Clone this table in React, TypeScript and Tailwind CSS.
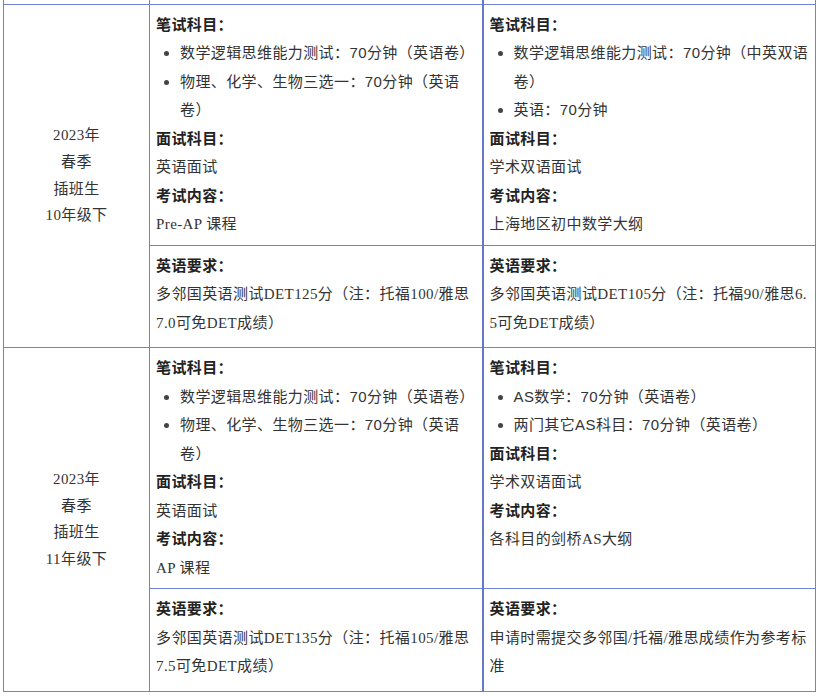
import React from 'react'

type Block =
  | { kind: 'label'; text: string }
  | { kind: 'text'; text: string }
  | { kind: 'list'; items: string[] }

interface Row {
  term: string[]
  left: Block[]
  right: Block[]
  leftEng: string
  rightEng: string
}

const rows: Row[] = [
  {
    term: ['2023年', '春季', '插班生', '10年级下'],
    left: [
      { kind: 'label', text: '笔试科目：' },
      { kind: 'list', items: ['数学逻辑思维能力测试：70分钟（英语卷）', '物理、化学、生物三选一：70分钟（英语卷）'] },
      { kind: 'label', text: '面试科目：' },
      { kind: 'text', text: '英语面试' },
      { kind: 'label', text: '考试内容：' },
      { kind: 'text', text: 'Pre-AP 课程' },
    ],
    right: [
      { kind: 'label', text: '笔试科目：' },
      { kind: 'list', items: ['数学逻辑思维能力测试：70分钟（中英双语卷）', '英语：70分钟'] },
      { kind: 'label', text: '面试科目：' },
      { kind: 'text', text: '学术双语面试' },
      { kind: 'label', text: '考试内容：' },
      { kind: 'text', text: '上海地区初中数学大纲' },
    ],
    leftEng: '多邻国英语测试DET125分（注：托福100/雅思7.0可免DET成绩）',
    rightEng: '多邻国英语测试DET105分（注：托福90/雅思6.5可免DET成绩）',
  },
  {
    term: ['2023年', '春季', '插班生', '11年级下'],
    left: [
      { kind: 'label', text: '笔试科目：' },
      { kind: 'list', items: ['数学逻辑思维能力测试：70分钟（英语卷）', '物理、化学、生物三选一：70分钟（英语卷）'] },
      { kind: 'label', text: '面试科目：' },
      { kind: 'text', text: '英语面试' },
      { kind: 'label', text: '考试内容：' },
      { kind: 'text', text: 'AP 课程' },
    ],
    right: [
      { kind: 'label', text: '笔试科目：' },
      { kind: 'list', items: ['AS数学：70分钟（英语卷）', '两门其它AS科目：70分钟（英语卷）'] },
      { kind: 'label', text: '面试科目：' },
      { kind: 'text', text: '学术双语面试' },
      { kind: 'label', text: '考试内容：' },
      { kind: 'text', text: '各科目的剑桥AS大纲' },
    ],
    leftEng: '多邻国英语测试DET135分（注：托福105/雅思7.5可免DET成绩）',
    rightEng: '申请时需提交多邻国/托福/雅思成绩作为参考标准',
  },
]

const serif = "font-['Liberation_Serif','Noto_Sans_CJK_SC',serif]"
const sans = "font-['Liberation_Sans','Noto_Sans_CJK_SC',sans-serif]"

function Blocks({ blocks }: { blocks: Block[] }) {
  return (
    <>
      {blocks.map((b, i) => {
        if (b.kind === 'label') {
          return (
            <p key={i} className="font-bold text-[#222]">
              {b.text}
            </p>
          )
        }
        if (b.kind === 'text') {
          return <p key={i}>{b.text}</p>
        }
        return (
          <ul key={i} className={`list-disc pl-[24px] marker:text-[#444] ${sans}`}>
            {b.items.map((it) => (
              <li key={it}>{it}</li>
            ))}
          </ul>
        )
      })}
    </>
  )
}

export default function App() {
  const border = 'border border-[#7083d0]'
  const rightBorder = 'border border-l-2 border-[#7083d0] border-l-[#6677c8]'

  return (
    <div
      className={`bg-white min-h-[696px] pl-[3px] text-[15px] leading-[28.5px] tracking-[0.4px] text-[#333] [text-spacing-trim:space-all] ${serif}`}
    >
      <table className="table-fixed border-collapse w-[812px]">
        <colgroup>
          <col className="w-[146px]" />
          <col className="w-[333px]" />
          <col className="w-[333px]" />
        </colgroup>
        <tbody>
          {/* tail of the previous row, cut off by the crop */}
          <tr className="h-[4px]">
            <td className="border-x border-[#7083d0] p-0" />
            <td className="border-x border-[#7083d0] p-0" />
            <td className="border-x border-l-2 border-[#7083d0] border-l-[#6677c8] p-0" />
          </tr>
          {rows.map((r, idx) => (
            <React.Fragment key={idx}>
              <tr>
                <td rowSpan={2} className={`${border} align-middle text-center leading-[26.7px]`}>
                  {r.term.map((t) => (
                    <p key={t}>{t}</p>
                  ))}
                </td>
                <td className={`${border} align-top pl-[6px] pr-[4px] pt-[6px] pb-[6px]`}>
                  <Blocks blocks={r.left} />
                </td>
                <td className={`${rightBorder} align-top pl-[6px] pr-[4px] pt-[6px] pb-[6px]`}>
                  <Blocks blocks={r.right} />
                </td>
              </tr>
              <tr>
                <td className={`${border} align-top pl-[6px] pr-[4px] pt-[6px] pb-[10px]`}>
                  <p className="font-bold text-[#222]">英语要求：</p>
                  <p>{r.leftEng}</p>
                </td>
                <td className={`${rightBorder} align-top pl-[6px] pr-[4px] pt-[6px] pb-[10px] break-all`}>
                  <p className="font-bold text-[#222]">英语要求：</p>
                  <p>{r.rightEng}</p>
                </td>
              </tr>
            </React.Fragment>
          ))}
        </tbody>
      </table>
    </div>
  )
}
